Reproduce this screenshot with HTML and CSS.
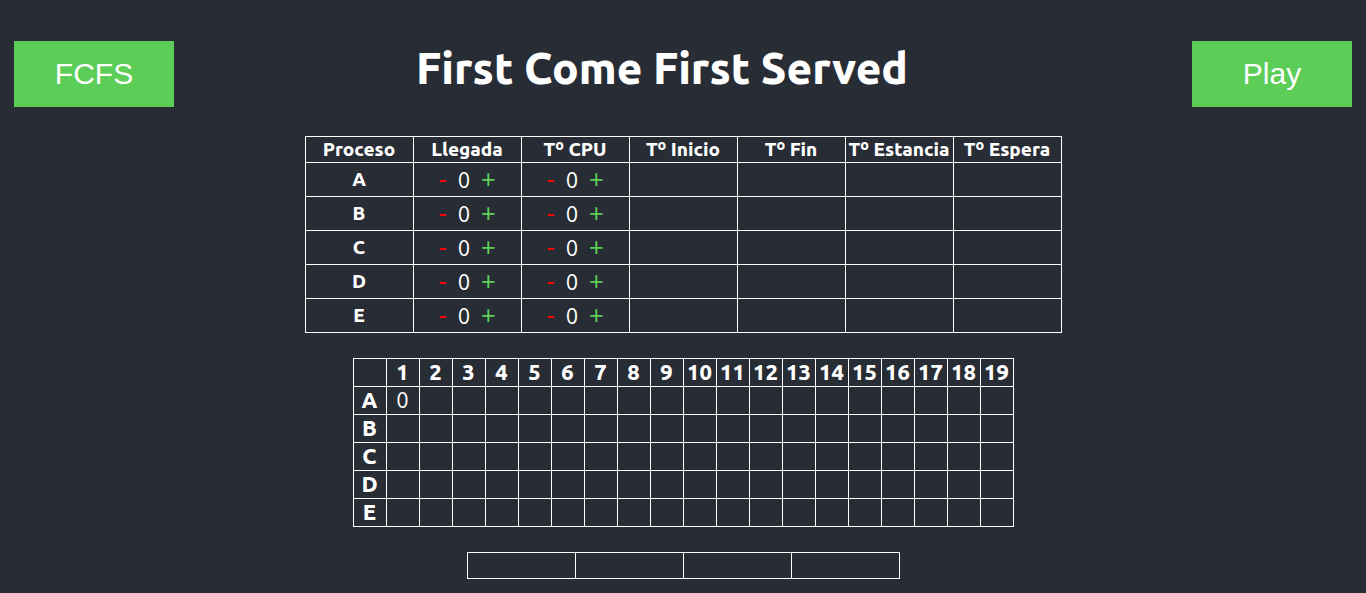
FILE: index.html
```html
<!DOCTYPE html>
<html lang="es">
<head>
<meta charset="utf-8">
<meta name="viewport" content="width=device-width, initial-scale=1">
<title>First Come First Served</title>
<link rel="stylesheet" href="styles.css">
</head>
<body>
<header class="header">
  <button class="action" type="button">FCFS</button>
  <h1 class="title">First Come First Served</h1>
  <button class="action" type="button">Play</button>
</header>
<main class="main">
  <table class="table processes">
    <thead>
      <tr><th scope="col">Proceso</th><th scope="col">Llegada</th><th scope="col">Tº CPU</th><th scope="col">Tº Inicio</th><th scope="col">Tº Fin</th><th scope="col">Tº Estancia</th><th scope="col">Tº Espera</th></tr>
    </thead>
    <tbody>
      <tr><th scope="row">A</th><td><div class="stepper"><button class="minus" type="button">-</button><span>0</span><button class="plus" type="button">+</button></div></td><td><div class="stepper"><button class="minus" type="button">-</button><span>0</span><button class="plus" type="button">+</button></div></td><td></td><td></td><td></td><td></td></tr>
      <tr><th scope="row">B</th><td><div class="stepper"><button class="minus" type="button">-</button><span>0</span><button class="plus" type="button">+</button></div></td><td><div class="stepper"><button class="minus" type="button">-</button><span>0</span><button class="plus" type="button">+</button></div></td><td></td><td></td><td></td><td></td></tr>
      <tr><th scope="row">C</th><td><div class="stepper"><button class="minus" type="button">-</button><span>0</span><button class="plus" type="button">+</button></div></td><td><div class="stepper"><button class="minus" type="button">-</button><span>0</span><button class="plus" type="button">+</button></div></td><td></td><td></td><td></td><td></td></tr>
      <tr><th scope="row">D</th><td><div class="stepper"><button class="minus" type="button">-</button><span>0</span><button class="plus" type="button">+</button></div></td><td><div class="stepper"><button class="minus" type="button">-</button><span>0</span><button class="plus" type="button">+</button></div></td><td></td><td></td><td></td><td></td></tr>
      <tr><th scope="row">E</th><td><div class="stepper"><button class="minus" type="button">-</button><span>0</span><button class="plus" type="button">+</button></div></td><td><div class="stepper"><button class="minus" type="button">-</button><span>0</span><button class="plus" type="button">+</button></div></td><td></td><td></td><td></td><td></td></tr>
    </tbody>
  </table>
  <table class="table timeline">
    <thead>
      <tr><td></td><th scope="col">1</th><th scope="col">2</th><th scope="col">3</th><th scope="col">4</th><th scope="col">5</th><th scope="col">6</th><th scope="col">7</th><th scope="col">8</th><th scope="col">9</th><th scope="col">10</th><th scope="col">11</th><th scope="col">12</th><th scope="col">13</th><th scope="col">14</th><th scope="col">15</th><th scope="col">16</th><th scope="col">17</th><th scope="col">18</th><th scope="col">19</th></tr>
    </thead>
    <tbody>
      <tr><th scope="row">A</th><td>0</td><td></td><td></td><td></td><td></td><td></td><td></td><td></td><td></td><td></td><td></td><td></td><td></td><td></td><td></td><td></td><td></td><td></td><td></td></tr>
      <tr><th scope="row">B</th><td></td><td></td><td></td><td></td><td></td><td></td><td></td><td></td><td></td><td></td><td></td><td></td><td></td><td></td><td></td><td></td><td></td><td></td><td></td></tr>
      <tr><th scope="row">C</th><td></td><td></td><td></td><td></td><td></td><td></td><td></td><td></td><td></td><td></td><td></td><td></td><td></td><td></td><td></td><td></td><td></td><td></td><td></td></tr>
      <tr><th scope="row">D</th><td></td><td></td><td></td><td></td><td></td><td></td><td></td><td></td><td></td><td></td><td></td><td></td><td></td><td></td><td></td><td></td><td></td><td></td><td></td></tr>
      <tr><th scope="row">E</th><td></td><td></td><td></td><td></td><td></td><td></td><td></td><td></td><td></td><td></td><td></td><td></td><td></td><td></td><td></td><td></td><td></td><td></td><td></td></tr>
    </tbody>
  </table>
  <table class="table queue">
    <tbody>
      <tr><td></td><td></td><td></td><td></td></tr>
    </tbody>
  </table>
</main>
</body>
</html>
```
FILE: styles.css
```css
* {
  box-sizing: border-box;
}

body {
  margin: 0;
  background: #282c34;
  color: #fff;
  font-family: Ubuntu, "Noto Sans", sans-serif;
}

.header {
  display: flex;
  justify-content: space-between;
  align-items: flex-start;
  padding: 41px 14px 29px;
}

.action {
  width: 160px;
  height: 66px;
  border: 0;
  background: #5cce57;
  color: #fff;
  font: 30px "Liberation Sans", Arial, sans-serif;
  cursor: pointer;
}

.title {
  margin: 0;
  padding-right: 42px;
  font-size: 44px;
  line-height: 54px;
  font-weight: 800;
}

.main {
  display: flex;
  flex-direction: column;
  align-items: center;
  gap: 25px;
  padding-bottom: 14px;
}

.table {
  border-collapse: collapse;
  table-layout: fixed;
}

.table th,
.table td {
  padding: 0;
  border: 1px solid #fff;
  text-align: center;
  vertical-align: middle;
  white-space: nowrap;
}

.table th {
  font-weight: 800;
}

.processes {
  width: 757px;
  font-size: 19px;
  line-height: 25px;
}

.processes tbody tr {
  height: 34px;
}

.stepper {
  display: flex;
  justify-content: center;
  align-items: center;
  font-size: 22px;
}

.stepper button {
  padding: 0;
  border: 0;
  background: none;
  font: 25px/25px "Liberation Sans", Arial, sans-serif;
  cursor: pointer;
}

.stepper .minus {
  width: 30px;
  color: #f00;
}

.stepper .plus {
  width: 36px;
  color: #5cce57;
}

.timeline {
  width: 661px;
  font-size: 22px;
  line-height: 25px;
}

.timeline th,
.timeline td {
  padding-bottom: 2px;
}

.timeline tr {
  height: 28px;
}

.queue {
  width: 433px;
}

.queue tr {
  height: 26px;
}
```
